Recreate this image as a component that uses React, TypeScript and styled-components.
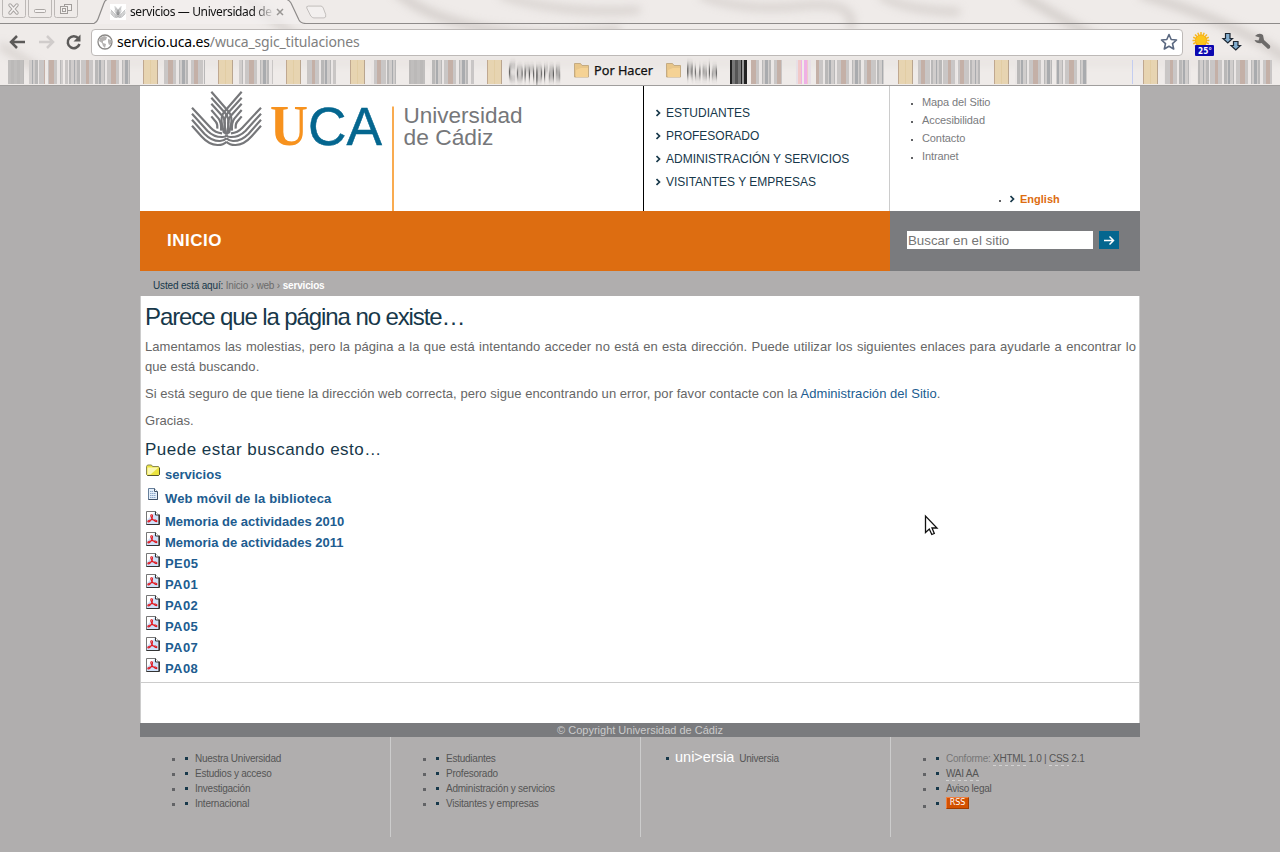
import React from "react";
import styled, { createGlobalStyle } from "styled-components";

const Global = createGlobalStyle`
  * { box-sizing: border-box; }
  html, body { margin: 0; padding: 0; }
  body { background: #b0aeae; font-family: "Liberation Sans", Arial, sans-serif; overflow: hidden; }
  ul { list-style: none; margin: 0; padding: 0; }
  h1, h2, p { margin: 0; font-weight: normal; }
  svg { display: block; flex: none; }
`;

const Screen = styled.div`
  width: 1280px;
  height: 852px;
  overflow: hidden;
`;

/* ---------- browser chrome ---------- */
const Chrome = styled.header`
  position: relative;
  height: 86px;
  background: #efebe9;
  border-bottom: 1px solid #a09e9d;
  overflow: hidden;
`;
const Marble = styled.svg`
  position: absolute;
  inset: 0;
`;
const ChromeRows = styled.div`
  position: relative;
  display: flex;
  flex-direction: column;
`;
const TabStrip = styled.div`
  display: flex;
  height: 24px;
`;
const Tab = styled.div`
  position: relative;
  width: 212px;
  height: 24px;
  display: flex;
  align-items: center;
  padding-left: 16px;
`;
const TabShape = styled.svg`
  position: absolute;
  left: 0;
  top: 0;
`;
const TabTitle = styled.span`
  position: relative;
  width: 143px;
  margin-left: 4px;
  font: 12px/22px "Noto Sans", sans-serif;
  letter-spacing: -0.38px;
  white-space: nowrap;
  overflow: hidden;
  color: #111;
  mask-image: linear-gradient(90deg, #000 86%, transparent 101%);
`;
const TabIcon = styled.svg`
  position: relative;
`;
const StripLine = styled.div`
  flex: 1;
  border-bottom: 1px solid #8e8b8a;
`;
const Toolbar = styled.div`
  display: flex;
  align-items: center;
  height: 36px;
  padding-left: 8px;
`;
const Omnibox = styled.div`
  display: flex;
  align-items: center;
  width: 1092px;
  height: 27px;
  margin-left: 9px;
  padding: 0 4px 0 5px;
  background: #fff;
  border: 1px solid #bdb9b7;
  border-radius: 4px;
`;
const Address = styled.span`
  flex: 1;
  margin-left: 4px;
  font: 14px/24px "Noto Sans", sans-serif;
  letter-spacing: -0.16px;
  color: #808080;
  b { font-weight: normal; color: #000; }
`;

/* ---------- site ---------- */
const Page = styled.div`
  width: 1000px;
  margin: 0 auto;
`;
const Banner = styled.div`
  display: flex;
  height: 125px;
  background: #fff;
`;
const LogoBox = styled.div`
  width: 503px;
`;
const MainNav = styled.ul`
  width: 247px;
  padding: 15px 0 0 12px;
  border-left: 1px solid #000;
  border-right: 1px solid #ccc;
`;
const NavItem = styled.li`
  display: flex;
  align-items: center;
  height: 23px;
  font-size: 12px;
  color: #17384a;
  svg { margin: 1px 5px 0 0; }
`;
const SideNav = styled.ul`
  flex: 1;
  padding-top: 7px;
`;
const SideItem = styled.li`
  display: flex;
  align-items: center;
  height: 18px;
  padding-left: 21px;
  font-size: 11px;
  letter-spacing: -0.1px;
  color: #7a7b7e;
`;
const LangItem = styled(SideItem)`
  margin-top: 25px;
  padding-left: 109px;
  letter-spacing: 0;
  color: #dd6d11;
  font-weight: bold;
  svg { margin: 0 5px 0 5px; }
`;
const Dot = styled.i<{ $size: number; $color?: string; $gap: number; $drop?: number }>`
  width: ${(p) => p.$size}px;
  height: ${(p) => p.$size}px;
  margin: ${(p) => p.$drop ?? 0}px ${(p) => p.$gap}px 0 0;
  background: ${(p) => p.$color ?? "#626366"};
  flex: none;
`;
const Bar = styled.div`
  display: flex;
  height: 60px;
  background: #dd6d11;
`;
const Section = styled.div`
  width: 750px;
  padding-left: 27px;
  font-size: 17px;
  font-weight: bold;
  line-height: 59px;
  letter-spacing: 0.5px;
  color: #fff;
`;
const Search = styled.div`
  display: flex;
  align-items: flex-start;
  flex: 1;
  padding: 20px 0 0 17px;
  background: #7a7b7e;
`;
const SearchField = styled.div`
  width: 186px;
  height: 18px;
  padding-left: 1px;
  background: #fff;
  font-size: 13.3px;
  line-height: 19px;
  color: #757575;
`;
const SearchButton = styled.div`
  width: 20px;
  height: 18px;
  margin-left: 6px;
  background: #04668f;
`;
const Crumbs = styled.div`
  height: 25px;
  padding-left: 13px;
  font-size: 10px;
  line-height: 30px;
  letter-spacing: -0.17px;
  color: #6b6b6b;
  white-space: pre;
  span { color: #17384a; }
  b { color: #fff; }
`;
const Content = styled.main`
  height: 387px;
  padding: 6px 3px 0 4px;
  background: #fff;
  border: 1px solid #ccc;
  border-top: 0;
`;
const Title = styled.h1`
  height: 35px;
  font-size: 24px;
  line-height: 30px;
  letter-spacing: -1.1px;
  color: #17384a;
`;
const Para = styled.p`
  margin-bottom: 7px;
  font-size: 13px;
  line-height: 20px;
  letter-spacing: 0.045px;
  text-align: justify;
  color: #666;
  span { color: #205c90; }
`;
const Subtitle = styled.h2`
  height: 26px;
  font-size: 17px;
  line-height: 24px;
  letter-spacing: 0.49px;
  color: #17384a;
`;
const ResultRow = styled.li<{ $height: number; $tracking?: number }>`
  display: flex;
  align-items: flex-start;
  height: ${(p) => p.$height}px;
  font-size: 13px;
  font-weight: bold;
  line-height: 21px;
  letter-spacing: ${(p) => p.$tracking ?? 0}px;
  color: #205c90;
  svg { margin-right: 4px; }
`;
const Spacer = styled.div`
  height: 40px;
  background: #fff;
  border: solid #ccc;
  border-width: 0 1px;
`;
const Copyright = styled.div`
  height: 14px;
  background: #7a7b7e;
  color: #ccc;
  font-size: 11px;
  line-height: 14px;
  text-align: center;
`;
const FooterGrid = styled.footer`
  display: grid;
  grid-template-columns: 251px 250px 250px 249px;
  height: 100px;
`;
const FooterCol = styled.ul<{ $inset: number; $last?: boolean }>`
  padding: 14px 0 0 ${(p) => p.$inset}px;
  border-right: ${(p) => (p.$last ? 0 : 1)}px solid #ccc;
`;
const FooterItem = styled.li`
  display: flex;
  align-items: center;
  height: 15px;
  font-size: 10px;
  letter-spacing: -0.24px;
  color: #555;
  white-space: pre;
`;
const Muted = styled.span`
  color: #777;
`;
const Abbr = styled.span`
  height: 15px;
  line-height: 15px;
  background: repeating-linear-gradient(90deg, #d2d2d2 0 3px, transparent 3px 6px) 0 100% / 100% 1px no-repeat;
`;
const Universia = styled.span`
  margin: -3px 5px 0 0;
  font-size: 14.5px;
  letter-spacing: 0;
  color: #fff;
`;
const Pointer = styled.svg`
  position: absolute;
  left: 924px;
  top: 514px;
`;

/* ---------- drawings ---------- */
const Chevron = () => (
  <svg width="5" height="8" viewBox="0 0 5 8" fill="none" stroke="#17384a" strokeWidth="1.700">
    <path d="M.5 1l3 3-3 3" />
  </svg>
);

const WingHalf = () => (
  <>
    <path d="M36 71L92 131Q106 146 126 148" />
    <path d="M36 89L82 140Q102 160 128 159Q136 159 140 154" />
    <path d="M36 107L73 149Q96 172 120 171Q132 171 140 163" />
    <path d="M36 125L64 157Q88 184 114 183Q130 183 140 173" />
    <path d="M94 23L146 83Q158 98 153 122L147 148" />
    <path d="M94 41L136 88Q148 102 145 124L141 152" />
    <path d="M94 59L127 96Q137 108 134 128L136 150" />
    <path d="M94 78L116 104Q125 116 123 140" />
    <path d="M94 97L108 114Q113 120 112 134" />
  </>
);
const Wings = () => (
  <g fill="none" stroke="#76777a" strokeWidth="6.500">
    <WingHalf />
    <g transform="translate(279 0) scale(-1 1)">
      <WingHalf />
    </g>
  </g>
);

const Logo = () => (
  <svg width="503" height="125" viewBox="140 86 503 125">
    <g transform="translate(180 84) scale(0.33333)">
      <Wings />
    </g>
    <text x="270" y="145" fontFamily="Liberation Serif, serif" fontWeight="bold" fontSize="58" fill="#f7921e" textLength="38" lengthAdjust="spacingAndGlyphs">U</text>
    <text x="308" y="145" fontFamily="Liberation Sans, sans-serif" fontSize="54" fill="#04668f" stroke="#04668f" strokeWidth="0.5" textLength="74" lengthAdjust="spacingAndGlyphs">CA</text>
    <rect x="392" y="106.500" width="2" height="105" fill="#f9ab50" />
    <g fontFamily="Liberation Sans, sans-serif" fontSize="21.500" fill="#76777a">
      <text x="403.500" y="122.500" textLength="119" lengthAdjust="spacingAndGlyphs">Universidad</text>
      <text x="403.500" y="145" textLength="90" lengthAdjust="spacingAndGlyphs">de Cádiz</text>
    </g>
  </svg>
);

const FolderIcon = () => (
  <svg width="16" height="16" viewBox="0 1 16 16">
    <path d="M1.500 11.500v-8l1-1.500h4l1 1.500h6l1 1.500v6.500l-1 1h-11z" fill="#ece43e" stroke="#8a8850" />
    <path d="M2.500 4.500h11l-8 7h-3z" fill="#fbf8b4" />
    <path d="M14.500 5v6.500l-1 1h-11" fill="none" stroke="#55542c" />
  </svg>
);
const PageIcon = () => (
  <svg width="16" height="16" viewBox="0 0 16 16">
    <path d="M3.500.5h6l3 3v8h-9z" fill="#e4effb" stroke="#67809c" />
    <path d="M9.500.5v3h3" fill="#fff" stroke="#44566c" />
    <path d="M5 3.500h3M5 5.500h6M5 7.500h6M5 9.500h6" stroke="#8fa9cb" strokeDasharray="1.500 .5" />
    <path d="M12.500 4v7.500h-9" fill="none" stroke="#3e4f66" />
  </svg>
);
const PdfIcon = () => (
  <svg width="16" height="16" viewBox="0 0 16 16">
    <path d="M1.500.5h9l3 3v10h-12z" fill="#cfe1fa" stroke="#777" />
    <path d="M2 1h8L2 9z" fill="#fff" />
    <path d="M14.500 3.500v10h-13" fill="none" stroke="#333" />
    <path d="M10.500.5v3.500h3.500" fill="#fff" stroke="#333" />
    <path d="M6 5.500c-1-2 1.500-2.500 1.500-.5C7.500 7.500 5 11 3.500 11c-1.500-.3-.5-2 3.500-2.300C9.500 8.500 12 9 12 10c-.3 1.500-3 0-4.300-1.700C6.700 7 6.300 6.200 6 5.500z" fill="none" stroke="#e0141b" strokeWidth="1.050" />
  </svg>
);

/* The RSS badge lettering is small capitals on an orange plate */
const RssBadge = styled.span`
  width: 23px;
  height: 12px;
  margin-top: -2px;
  border: 1px solid;
  border-color: #f08040 #a03c00 #a03c00 #f08040;
  background: #d35100;
  color: #fff;
  font: 8px/10px "DejaVu Sans", sans-serif;
  letter-spacing: 0;
  text-align: center;
`;

/* Stretched bookmark favicons and titles: [start, end, kind] in pixels */
type Kind = "solid" | "folder" | "bars" | "dark" | "rainbow" | "line";
const strips: [number, number, Kind][] = [
  [8, 24, "solid"], [29, 45, "bars"], [48, 63, "bars"], [65, 130, "bars"], [143, 158, "folder"],
  [164, 205, "bars"], [218, 233, "folder"], [239, 273, "bars"], [286, 301, "folder"], [307, 336, "bars"],
  [350, 365, "folder"], [371, 396, "bars"], [409, 425, "solid"], [430, 474, "bars"], [487, 502, "folder"],
  [730, 747, "dark"], [751, 782, "bars"], [796, 811, "rainbow"], [816, 884, "bars"], [898, 913, "folder"],
  [918, 957, "bars"], [958, 980, "bars"], [994, 1009, "folder"], [1015, 1052, "bars"], [1056, 1087, "bars"],
  [1132, 1133, "line"], [1143, 1158, "folder"], [1164, 1191, "bars"], [1197, 1272, "bars"],
];
const tints = ["#c9c6c5", "#b9b8b8", "#e2dfde", "#b3c2cd", "#c4c1c0", "#cfcccb", "#eae6e5", "#c4b0a7", "#bdbcbc", "#c9c6c6", "#a9abae", "#d0cdcc", "#eeeae8"];
const darks = ["#222", "#555", "#111", "#777", "#333", "#444", "#999"];
const rainbow = ["#efb0e6", "#e7dfe6", "#d8b0d8", "#f1c8c8", "#efe7d2", "#bfe8f4", "#efebe9"];

const Strip = ({ from, to, kind }: { from: number; to: number; kind: Kind }) => {
  const w = to - from;
  if (kind === "line") return <rect x={from} y="60" width="1" height="24" fill="#c3cdf0" />;
  if (kind === "folder")
    return (
      <g>
        <rect x={from} y="60" width={w} height="24" fill="#e7d4b1" />
        <rect x={from} y="60" width="1" height="24" fill="#c0a890" />
        <rect x={to - 1} y="60" width="1" height="24" fill="#b9a58f" />
        <rect x={from + 7} y="60" width="1" height="24" fill="#e2cda4" />
      </g>
    );
  const palette = kind === "dark" ? darks : kind === "rainbow" ? rainbow : kind === "solid" ? ["#bbb9b8", "#b3b1b0", "#c0bebd"] : tints;
  const cells = [];
  let x = from;
  let i = from;
  while (x < to) {
    const step = Math.min(to - x, 1 + ((i * 7) % 3));
    cells.push(<rect key={x} x={x} y="60" width={step} height="24" fill={palette[(i * i + i * 5) % palette.length]} />);
    x += step;
    i += 1;
  }
  return <g>{cells}</g>;
};

const SmallFolder = ({ x }: { x: number }) => (
  <g transform={`translate(${x} 62)`}>
    <path d="M.5 15V1.500h6l1.500 2h6.500V15z" fill="#e8c68a" stroke="#c4ab83" />
    <path d="M2 15V8l5-2h7v9z" fill="#f5d294" />
  </g>
);

const Backdrop = () => (
  <Marble width="1280" height="86" viewBox="0 0 1280 86">
    <defs>
      <filter id="soft" x="-20%" y="-50%" width="140%" height="200%"><feGaussianBlur stdDeviation="5" /></filter>
      <filter id="smear" x="-10%" y="-30%" width="120%" height="160%"><feGaussianBlur stdDeviation="0.4 3" /></filter>
    </defs>
    <g filter="url(#soft)" fill="none" stroke="#c9c3bf" opacity=".8">
      <path d="M240 -5L300 40" strokeWidth="6" />
      <path d="M395 -10Q420 15 480 28T620 30" strokeWidth="8" />
      <path d="M500 -5Q560 15 640 10" strokeWidth="6" />
      <path d="M700 -5Q740 12 800 6T850 30" strokeWidth="6" />
      <path d="M880 -5Q900 10 960 12" strokeWidth="6" />
      <path d="M1020 -6Q1080 30 1100 40M1140 -6Q1230 20 1290 60" strokeWidth="8" />
      <path d="M0 45L40 70" strokeWidth="6" />
      <path d="M100 62H1280" stroke="#dedad8" strokeWidth="4" />
    </g>
    {strips.map(([from, to, kind]) => (
      <Strip key={from} from={from} to={to} kind={kind} />
    ))}
    <SmallFolder x={574} />
    <SmallFolder x={666} />
    <g fontFamily="Noto Sans, sans-serif" fontSize="12">
      <g filter="url(#smear)" fill="#444">
        <text x="508" y="79" fontSize="20" textLength="53" lengthAdjust="spacingAndGlyphs">Compras</text>
        <text x="686" y="77" fontSize="17" textLength="32" lengthAdjust="spacingAndGlyphs">Rusia</text>
      </g>
      <text x="594" y="75" fill="#111" stroke="#111" strokeWidth=".25" textLength="59" lengthAdjust="spacingAndGlyphs">Por Hacer</text>
    </g>
  </Marble>
);

const WindowButtons = () => (
  <svg width="94" height="24" viewBox="0 0 94 24" fill="none" stroke="#bcb8b6">
    <path d="M0 23.500h94" stroke="#8e8b8a" />
    <rect x="2.500" y="-2.500" width="23" height="20" rx="2" />
    <rect x="28.500" y="-2.500" width="23" height="20" rx="2" />
    <rect x="54.500" y="-2.500" width="23" height="20" rx="2" />
    <path d="M10 5l7 8M17 5l-7 8" stroke="#aaa6a4" strokeWidth="3.500" strokeLinecap="round" />
    <path d="M10 5l7 8M17 5l-7 8" stroke="#f6f3f2" strokeWidth="1.500" strokeLinecap="round" />
    <rect x="34.500" y="9.500" width="11" height="3" rx="1" stroke="#aaa6a4" fill="#f6f3f2" />
    <g stroke="#a19d9b" fill="#f3f0ee">
      <rect x="64.500" y="4.500" width="7" height="6" />
      <rect x="60.500" y="6.500" width="7" height="7" />
      <rect x="62.500" y="8.500" width="3" height="3" />
    </g>
  </svg>
);

const App = () => (
  <Screen>
    <Global />
    <Chrome>
      <Backdrop />
      <ChromeRows>
        <TabStrip>
          <WindowButtons />
          <Tab>
            <TabShape width="212" height="24" viewBox="0 0 212 24">
              <path d="M0 24Q3 22 4 19L10 3Q11 0 14 0H192Q195 0 197 3L205 20Q207 24 212 24Z" fill="#f3f0ef" fillOpacity=".65" />
              <path d="M0 23.500Q3 22 4 19L10 3Q11 0 14 -1M192 -1Q195 0 197 3L205 20Q207 23.500 212 23.500" fill="none" stroke="#8e8b8a" strokeWidth="1.200" />
            </TabShape>
            <TabIcon width="16" height="16" viewBox="25 -10 228 228">
              <rect x="25" y="-10" width="228" height="228" fill="#fff" />
              <Wings />
            </TabIcon>
            <TabTitle>servicios — Universidad de Cádiz</TabTitle>
            <TabIcon width="14" height="14" viewBox="-3 0 14 14" stroke="#999694" strokeWidth="1.500">
              <path d="M1 4l6 6M7 4l-6 6" />
            </TabIcon>
          </Tab>
          <StripLine>
            <svg width="22" height="24" viewBox="-6 0 28 24" overflow="visible" preserveAspectRatio="xMaxYMid meet">
              <path d="M-3 4.500H13Q15 4.500 16 7L19 15Q20 19.500 17 19.500H4Q2 19.500 0 17L-5 7Q-6 4.500 -3 4.500Z" fill="#f3f0ef" stroke="#b5b1af" />
            </svg>
          </StripLine>
        </TabStrip>
        <Toolbar>
          <svg width="74" height="20" viewBox="0 0 74 20" fill="none" strokeWidth="2.500">
            <path d="M17 10H4M9 4L3 10l6 6" stroke="#5c5a59" />
            <path d="M31 10h13M39 4l6 6-6 6" stroke="#d0cccb" />
            <path d="M70.500 6.500A6 6 0 1 0 71.500 12" stroke="#5c5a59" />
            <path d="M72.500 2.500v7h-7z" fill="#5c5a59" stroke="none" />
          </svg>
          <Omnibox>
            <svg width="16" height="16" viewBox="0 0 16 16">
              <circle cx="8" cy="8" r="7" fill="#fff" stroke="#8a8886" strokeWidth="1.300" />
              <path d="M3 4l4-2 3 1-1 3-3 1 0 2 3 1-1 4-2-2-1-3-3-2zM11 5l3 1v4l-2 1-1-3z" fill="#b4b2b1" />
            </svg>
            <Address><b>servicio.uca.es</b>/wuca_sgic_titulaciones</Address>
            <svg width="18" height="18" viewBox="0 0 18 18">
              <path d="M9 1.500l2.200 5 5.300.5-4 3.600 1.200 5.400L9 13.200 4.300 16l1.200-5.400-4-3.600 5.300-.5z" fill="#fff" stroke="#5a6880" strokeWidth="1.600" strokeLinejoin="round" />
            </svg>
          </Omnibox>
          <svg width="97" height="32" viewBox="1183 26 97 32">
            <g stroke="#f6b820" strokeWidth="1.500">
              <path d="M1201 32v17M1192.500 40.500h17M1195 34.500l12 12M1207 34.500l-12 12M1197.800 32.700l6.400 15.600M1204.200 32.700l-6.400 15.600M1193.200 37.300l15.600 6.400M1193.200 43.700l15.600-6.400" />
            </g>
            <circle cx="1201" cy="40.500" r="5.500" fill="#fbc51c" stroke="#f8ae18" />
            <rect x="1195" y="45" width="19" height="11" rx="1" fill="#0b08b0" />
            <text x="1198" y="54" fontFamily="DejaVu Sans, sans-serif" fontWeight="bold" fontSize="9" fill="#fff" textLength="14" lengthAdjust="spacingAndGlyphs">25°</text>
            <g fill="#83aed0" stroke="#1d2733" strokeWidth="1.200">
              <path d="M1225.500 33.500h4.500v5h2.500l-4.700 4.500-4.800-4.500h2.500z" />
              <path d="M1233.500 41.500h4.500v4h2.500l-4.700 4.500-4.800-4.500h2.500z" />
            </g>
            <path d="M1255 36q4-4 8-1l1 5 6 5.500q1 3-2 3.500l-6.500-6q-5 1-7-3l4 .5 1-3z" fill="#6c6a69" />
          </svg>
        </Toolbar>
      </ChromeRows>
    </Chrome>

    <Page>
      <Banner>
        <LogoBox><Logo /></LogoBox>
        <MainNav>
          {["ESTUDIANTES", "PROFESORADO", "ADMINISTRACIÓN Y SERVICIOS", "VISITANTES Y EMPRESAS"].map((t) => (
            <NavItem key={t}><Chevron />{t}</NavItem>
          ))}
        </MainNav>
        <SideNav>
          {["Mapa del Sitio", "Accesibilidad", "Contacto", "Intranet"].map((t) => (
            <SideItem key={t}><Dot $size={2} $gap={9} $drop={3} />{t}</SideItem>
          ))}
          <LangItem><Dot $size={2} $gap={4} $drop={3} /><Chevron />English</LangItem>
        </SideNav>
      </Banner>
      <Bar>
        <Section>INICIO</Section>
        <Search>
          <SearchField>Buscar en el sitio</SearchField>
          <SearchButton>
            <svg width="20" height="18" viewBox="0 0 20 18" fill="none" stroke="#fff" strokeWidth="1.500">
              <path d="M5 9.500h9.500M10.500 5.500l4 4-4 4" />
            </svg>
          </SearchButton>
        </Search>
      </Bar>
      <Crumbs><span>Usted está aquí: </span>Inicio › web › <b>servicios</b></Crumbs>
      <Content>
        <Title>Parece que la página no existe…</Title>
        <Para>
          Lamentamos las molestias, pero la página a la que está intentando acceder no está en esta dirección. Puede utilizar los siguientes enlaces para ayudarle a encontrar lo que está buscando.
        </Para>
        <Para>
          Si está seguro de que tiene la dirección web correcta, pero sigue encontrando un error, por favor contacte con la <span>Administración del Sitio</span>.
        </Para>
        <Para>Gracias.</Para>
        <Subtitle>Puede estar buscando esto…</Subtitle>
        <ul>
          <ResultRow $height={24}><FolderIcon />servicios</ResultRow>
          <ResultRow $height={23} $tracking={0.16}><PageIcon />Web móvil de la biblioteca</ResultRow>
          {["Memoria de actividades 2010", "Memoria de actividades 2011"].map((t) => (
            <ResultRow key={t} $height={21}><PdfIcon />{t}</ResultRow>
          ))}
          {["PE05", "PA01", "PA02", "PA05", "PA07", "PA08"].map((t) => (
            <ResultRow key={t} $height={21} $tracking={0.4}><PdfIcon />{t}</ResultRow>
          ))}
        </ul>
      </Content>
      <Spacer />
      <Copyright>© Copyright Universidad de Cádiz</Copyright>
      <FooterGrid>
        <FooterCol $inset={32}>
          {["Nuestra Universidad", "Estudios y acceso", "Investigación", "Internacional"].map((t) => (
            <FooterItem key={t}><Dot $size={3} $gap={10} $drop={1} /><Dot $size={3} $gap={7} $color="#17384a" />{t}</FooterItem>
          ))}
        </FooterCol>
        <FooterCol $inset={32}>
          {["Estudiantes", "Profesorado", "Administración y servicios", "Visitantes y empresas"].map((t) => (
            <FooterItem key={t}><Dot $size={3} $gap={10} $drop={1} /><Dot $size={3} $gap={7} $color="#17384a" />{t}</FooterItem>
          ))}
        </FooterCol>
        <FooterCol $inset={25}>
          <FooterItem><Dot $size={3} $gap={6} $color="#17384a" /><Universia>uni&gt;ersia</Universia>Universia</FooterItem>
        </FooterCol>
        <FooterCol $inset={32} $last>
          <FooterItem><Dot $size={3} $gap={10} $drop={1} /><Dot $size={3} $gap={7} $color="#17384a" /><Muted>Conforme: </Muted><Abbr>XHTML</Abbr> 1.0 | <Abbr>CSS</Abbr> 2.1</FooterItem>
          <FooterItem><Dot $size={3} $gap={10} $drop={1} /><Dot $size={3} $gap={7} $color="#17384a" /><Abbr>WAI AA</Abbr></FooterItem>
          <FooterItem><Dot $size={3} $gap={10} $drop={1} /><Dot $size={3} $gap={7} $color="#17384a" />Aviso legal</FooterItem>
          <FooterItem><Dot $size={3} $gap={10} $drop={5} /><Dot $size={3} $gap={7} $color="#17384a" /><RssBadge>RSS</RssBadge></FooterItem>
        </FooterCol>
      </FooterGrid>
    </Page>
    <Pointer width="16" height="24" viewBox="0 0 16 24">
      <path d="M1.500 2v16.500l3.800-3.500 2.500 5.500 2.500-1-2.300-5.500h5z" fill="#fff" stroke="#111" strokeWidth="1.300" />
    </Pointer>
  </Screen>
);

export default App;
